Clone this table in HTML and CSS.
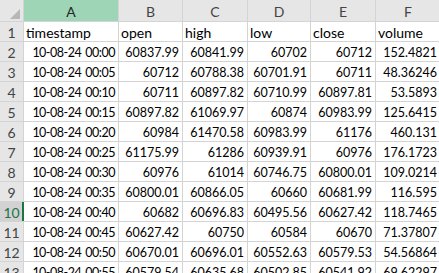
FILE: index.html
```html
<!DOCTYPE html>
<html>
<head>
  <title>Sheet</title>
  <link rel="stylesheet" href="styles.css">
</head>
<body>
  <div class="sheet">
    <div class="corner">
      <svg width="10" height="10" viewBox="0 0 10 10"><polygon points="10,0 10,10 0,10" fill="#b7b7b7"/></svg>
    </div>
    <div class="col-head selected">A</div>
    <div class="col-head">B</div>
    <div class="col-head">C</div>
    <div class="col-head">D</div>
    <div class="col-head">E</div>
    <div class="col-head">F</div>

    <div class="row-head">1</div>
    <div class="cell text">timestamp</div>
    <div class="cell text">open</div>
    <div class="cell text">high</div>
    <div class="cell text">low</div>
    <div class="cell text">close</div>
    <div class="cell text">volume</div>

    <div class="row-head">2</div>
    <div class="cell date">10-08-24 00:00</div>
    <div class="cell">60837.99</div>
    <div class="cell">60841.99</div>
    <div class="cell">60702</div>
    <div class="cell">60712</div>
    <div class="cell">152.4821</div>

    <div class="row-head">3</div>
    <div class="cell date">10-08-24 00:05</div>
    <div class="cell">60712</div>
    <div class="cell">60788.38</div>
    <div class="cell">60701.91</div>
    <div class="cell">60711</div>
    <div class="cell">48.36246</div>

    <div class="row-head">4</div>
    <div class="cell date">10-08-24 00:10</div>
    <div class="cell">60711</div>
    <div class="cell">60897.82</div>
    <div class="cell">60710.99</div>
    <div class="cell">60897.81</div>
    <div class="cell">53.5893</div>

    <div class="row-head">5</div>
    <div class="cell date">10-08-24 00:15</div>
    <div class="cell">60897.82</div>
    <div class="cell">61069.97</div>
    <div class="cell">60874</div>
    <div class="cell">60983.99</div>
    <div class="cell">125.6415</div>

    <div class="row-head">6</div>
    <div class="cell date">10-08-24 00:20</div>
    <div class="cell">60984</div>
    <div class="cell">61470.58</div>
    <div class="cell">60983.99</div>
    <div class="cell">61176</div>
    <div class="cell">460.131</div>

    <div class="row-head">7</div>
    <div class="cell date">10-08-24 00:25</div>
    <div class="cell">61175.99</div>
    <div class="cell">61286</div>
    <div class="cell">60939.91</div>
    <div class="cell">60976</div>
    <div class="cell">176.1723</div>

    <div class="row-head">8</div>
    <div class="cell date">10-08-24 00:30</div>
    <div class="cell">60976</div>
    <div class="cell">61014</div>
    <div class="cell">60746.75</div>
    <div class="cell">60800.01</div>
    <div class="cell">109.0214</div>

    <div class="row-head">9</div>
    <div class="cell date">10-08-24 00:35</div>
    <div class="cell">60800.01</div>
    <div class="cell">60866.05</div>
    <div class="cell">60660</div>
    <div class="cell">60681.99</div>
    <div class="cell">116.595</div>

    <div class="row-head active">10</div>
    <div class="cell date">10-08-24 00:40</div>
    <div class="cell">60682</div>
    <div class="cell">60696.83</div>
    <div class="cell">60495.56</div>
    <div class="cell">60627.42</div>
    <div class="cell">118.7465</div>

    <div class="row-head">11</div>
    <div class="cell date">10-08-24 00:45</div>
    <div class="cell">60627.42</div>
    <div class="cell">60750</div>
    <div class="cell">60584</div>
    <div class="cell">60670</div>
    <div class="cell">71.37807</div>

    <div class="row-head">12</div>
    <div class="cell date">10-08-24 00:50</div>
    <div class="cell">60670.01</div>
    <div class="cell">60696.01</div>
    <div class="cell">60552.63</div>
    <div class="cell">60579.53</div>
    <div class="cell">54.56864</div>

    <div class="row-head">13</div>
    <div class="cell date">10-08-24 00:55</div>
    <div class="cell">60579.54</div>
    <div class="cell">60635.68</div>
    <div class="cell">60502.85</div>
    <div class="cell">60541.92</div>
    <div class="cell">69.62297</div>
  </div>
</body>
</html>
```

FILE: styles.css
```css
:root {
  --grid: #d4d4d4;
  --head-bg: #e6e6e6;
  --head-text: #444444;
  --head-active: #d2d2d2;
  --select-bg: #9fd5b7;
  --excel-green: #217346;
}

body {
  margin: 0;
  width: 439px;
  height: 273px;
  overflow: hidden;
  background: #ffffff;
  font-family: 'Lato', 'Liberation Sans', sans-serif;
  font-size: 14px;
  color: #000000;
}

.sheet {
  display: grid;
  grid-template-columns: 23px 94px 63px 64px 62px 64px 64px;
  grid-template-rows: 21px;
  grid-auto-rows: 19px;
  gap: 1px;
  background: var(--grid);
  width: max-content;
}

.corner {
  background: var(--head-bg);
  display: flex;
  justify-content: flex-end;
  align-items: flex-end;
  padding: 0 3px 2px 0;
}

.corner svg {
  display: block;
}

.col-head {
  background: var(--head-bg);
  color: var(--head-text);
  display: flex;
  align-items: center;
  justify-content: center;
  padding-top: 1px;
}

.col-head.selected {
  background: var(--select-bg);
  color: #262626;
}

.row-head {
  background: var(--head-bg);
  color: var(--head-text);
  display: flex;
  align-items: center;
  justify-content: center;
  padding-top: 2px;
}

.row-head.active {
  background: var(--head-active);
  color: var(--excel-green);
  box-shadow: inset -1px 0 0 var(--excel-green), 1px 0 0 var(--excel-green);
}

.cell {
  background: #ffffff;
  display: flex;
  align-items: center;
  justify-content: flex-end;
  padding: 2px 3px 0 2px;
  font-size: 12.5px;
  white-space: nowrap;
  overflow: hidden;
}

.cell.text {
  justify-content: flex-start;
  font-size: 14px;
}

.cell.date {
  letter-spacing: -0.5px;
  word-spacing: 1.5px;
}
```
